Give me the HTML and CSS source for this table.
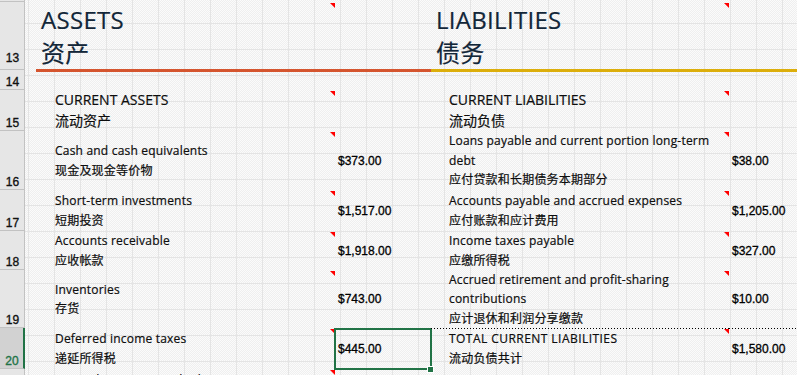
FILE: index.html
```html
<!DOCTYPE html>
<html lang="zh-CN">
<head>
<meta charset="utf-8">
<title>Balance sheet</title>
<link rel="stylesheet" href="styles.css">
</head>
<body>
<div class="sheet">
  <div class="row r12">
    <div class="rh"></div>
  </div>

  <div class="row r13">
    <div class="rh">13</div>
    <div class="ca"></div>
    <div class="lt head note"><span class="ln">ASSETS</span><span class="ln">资产</span></div>
    <div class="lv head"></div>
    <div class="rt head note"><span class="ln">LIABILITIES</span><span class="ln">债务</span></div>
    <div class="rv head"></div>
  </div>

  <div class="row r14">
    <div class="rh">14</div>
    <div class="ca"></div>
    <div class="lt"></div>
    <div class="lv"></div>
    <div class="rt"></div>
    <div class="rv"></div>
  </div>

  <div class="row r15">
    <div class="rh">15</div>
    <div class="ca"></div>
    <div class="lt sub note"><span class="ln">CURRENT ASSETS</span><span class="ln">流动资产</span></div>
    <div class="lv"></div>
    <div class="rt sub note"><span class="ln">CURRENT LIABILITIES</span><span class="ln">流动负债</span></div>
    <div class="rv"></div>
  </div>

  <div class="row r16">
    <div class="rh">16</div>
    <div class="ca"></div>
    <div class="lt note"><span class="ln">Cash and cash equivalents</span><span class="ln">现金及现金等价物</span></div>
    <div class="lv">$373.00</div>
    <div class="rt note"><span class="ln">Loans payable and current portion long-term</span><span class="ln">debt</span><span class="ln">应付贷款和长期债务本期部分</span></div>
    <div class="rv">$38.00</div>
  </div>

  <div class="row r17">
    <div class="rh">17</div>
    <div class="ca"></div>
    <div class="lt note"><span class="ln">Short-term investments</span><span class="ln">短期投资</span></div>
    <div class="lv">$1,517.00</div>
    <div class="rt note"><span class="ln">Accounts payable and accrued expenses</span><span class="ln">应付账款和应计费用</span></div>
    <div class="rv">$1,205.00</div>
  </div>

  <div class="row r18">
    <div class="rh">18</div>
    <div class="ca"></div>
    <div class="lt note"><span class="ln">Accounts receivable</span><span class="ln">应收帐款</span></div>
    <div class="lv">$1,918.00</div>
    <div class="rt note"><span class="ln">Income taxes payable</span><span class="ln">应缴所得税</span></div>
    <div class="rv">$327.00</div>
  </div>

  <div class="row r19">
    <div class="rh">19</div>
    <div class="ca"></div>
    <div class="lt note"><span class="ln">Inventories</span><span class="ln">存货</span></div>
    <div class="lv">$743.00</div>
    <div class="rt note"><span class="ln">Accrued retirement and profit-sharing</span><span class="ln">contributions</span><span class="ln">应计退休和利润分享缴款</span></div>
    <div class="rv">$10.00</div>
  </div>

  <div class="row r20">
    <div class="rh sel">20</div>
    <div class="ca"></div>
    <div class="lt note"><span class="ln">Deferred income taxes</span><span class="ln">递延所得税</span></div>
    <div class="lv active">$445.00<span class="handle"></span></div>
    <div class="rt brk note"><span class="ln caps">TOTAL CURRENT LIABILITIES</span><span class="ln">流动负债共计</span></div>
    <div class="rv brk">$1,580.00</div>
  </div>

  <div class="row r21">
    <div class="rh">21</div>
    <div class="ca"></div>
    <div class="lt note"><span class="ln">Prepaid expenses and other</span><span class="ln">预付费用及其他</span></div>
    <div class="lv"></div>
    <div class="rt"></div>
    <div class="rv"></div>
  </div>
</div>
</body>
</html>
```

FILE: styles.css
```css
html, body {
  margin: 0;
  padding: 0;
  width: 797px;
  height: 375px;
  overflow: hidden;
  background: #ffffff;
}

.sheet {
  width: 797px;
  height: 375px;
  overflow: hidden;
  font-family: "Open Sans", "Noto Sans CJK SC", sans-serif;
  font-size: 12px;
  color: #0d0d0d;
  background-color: #f6f6f6;
  background-image:
    linear-gradient(90deg, #e4e4e4 1px, transparent 1px),
    linear-gradient(#e4e4e4 1px, transparent 1px),
    repeating-conic-gradient(#efefef 0 25%, #fbfbfb 0 50%);
  background-size: 26px 26px, 26px 26px, 2px 2px;
  background-position: 2px 0, 0 23px, 0 0;
}

.row {
  display: flex;
  flex: none;
}

.r12 { height: 2px; }
.r13 { height: 70px; }
.r14 { height: 18px; }
.r15 { height: 41px; }
.r16 { height: 59px; }
.r17 { height: 41px; }
.r18 { height: 39px; }
.r19 { height: 58px; }
.r20 { height: 41px; }
.r21 { height: 41px; }

/* row headers */
.rh {
  width: 25px;
  flex: none;
  box-sizing: border-box;
  background: #e6e6e6;
  border-right: 1px solid #c2c2c2;
  border-bottom: 1px solid #c2c2c2;
  display: flex;
  align-items: flex-end;
  justify-content: center;
  padding-left: 1px;
  font-family: "Liberation Sans", Arial, sans-serif;
  font-size: 12px;
  line-height: 14px;
  color: #111111;
  -webkit-text-stroke: 0.35px currentColor;
}

.r13 .rh {
  margin-bottom: 2px;
  padding-bottom: 4px;
}

.r14 .rh {
  margin-top: -2px;
}

.rh.sel {
  background: #d2d2d2;
  color: #217346;
  border-right: 2px solid #217346;
}

/* columns */
.ca { width: 11px; flex: none; }

.lt, .rt {
  position: relative;
  box-sizing: border-box;
  flex: none;
  display: flex;
  flex-direction: column;
  justify-content: center;
  line-height: 19.5px;
  letter-spacing: 0.2px;
  -webkit-text-stroke: 0.2px currentColor;
}

.lt { width: 299px; padding-left: 19px; }
.rt { width: 298px; padding-left: 18px; }

.ln { white-space: nowrap; }

.sub {
  font-size: 14px;
  line-height: 20.5px;
  letter-spacing: 0;
}

.caps { letter-spacing: 0.45px; }

.lv, .rv {
  position: relative;
  box-sizing: border-box;
  display: flex;
  align-items: center;
  padding-left: 3px;
  font-family: "Liberation Sans", Arial, sans-serif;
  font-size: 12px;
  color: #000000;
  white-space: nowrap;
  -webkit-text-stroke: 0.3px currentColor;
}

.lv { width: 96px; flex: none; }
.rv { flex: 1; }

/* title row */
.head {
  border-bottom: 3px solid #d5552f;
}

.rt.head, .rv.head {
  border-bottom-color: #dcae0b;
}

.lt.head, .rt.head {
  padding-left: 5px;
  font-size: 24px;
  line-height: 33px;
  letter-spacing: 0.3px;
  color: #122638;
  -webkit-text-stroke: 0.2px currentColor;
}

/* comment indicators */
.note::after {
  content: "";
  position: absolute;
  top: 1px;
  right: 0;
  width: 0;
  height: 0;
  border-left: 5px solid transparent;
  border-top: 5px solid #ff0000;
}

/* page break line */
.brk {
  background-image: linear-gradient(90deg, #000 50%, transparent 50%);
  background-size: 3px 1px;
  background-repeat: repeat-x;
  background-position: 0 0;
}

/* active cell */
.active::before {
  content: "";
  position: absolute;
  left: -1px;
  top: 0;
  right: -1px;
  bottom: -1px;
  border: 2px solid #217346;
}

.handle {
  position: absolute;
  right: -3px;
  bottom: -4px;
  width: 5px;
  height: 5px;
  background: #217346;
  border: 1px solid #ffffff;
}
```
